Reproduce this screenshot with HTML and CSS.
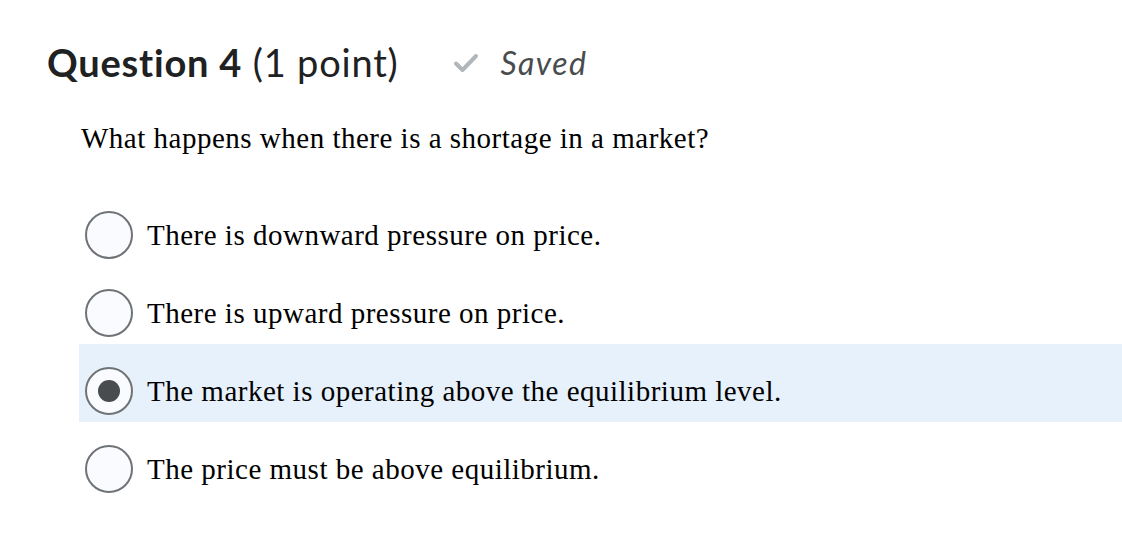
FILE: index.html
```html
<!DOCTYPE html>
<html>
<head>
<meta charset="utf-8">
<link rel="stylesheet" href="styles.css">
</head>
<body>
<main class="question">
  <header class="q-header">
    <h1 class="q-title"><strong>Question 4</strong> <span class="q-points">(1 point)</span></h1>
    <div class="q-status">
      <svg class="check" viewBox="0 0 26 20" width="26" height="20" aria-hidden="true"><path d="M3 10.5 L9.5 17 L23 3" fill="none" stroke="#b1b6ba" stroke-width="4" stroke-linecap="round" stroke-linejoin="round"/></svg>
      <span class="saved">Saved</span>
    </div>
  </header>
  <p class="q-text">What happens when there is a shortage in a market?</p>
  <ul class="options">
    <li class="option"><span class="radio"></span><span class="label">There is downward pressure on price.</span></li>
    <li class="option"><span class="radio"></span><span class="label">There is upward pressure on price.</span></li>
    <li class="option selected"><span class="radio checked"></span><span class="label">The market is operating above the equilibrium level.</span></li>
    <li class="option"><span class="radio"></span><span class="label">The price must be above equilibrium.</span></li>
  </ul>
</main>
</body>
</html>
```
FILE: styles.css
```css
* { box-sizing: border-box; }
body {
  margin: 0;
  background: #ffffff;
  color: #000;
}
.question {
  padding: 36px 0 0 47px;
}
.q-header {
  display: flex;
  align-items: center;
  gap: 54px;
  height: 52px;
}
.q-title {
  margin: 0;
  font-family: Lato, "Liberation Sans", sans-serif;
  font-size: 38px;
  font-weight: 400;
  letter-spacing: 0.8px;
  color: #202122;
  font-variant-ligatures: none;
}
.q-title strong { font-weight: 700; }
.q-status {
  display: flex;
  align-items: center;
  gap: 22px;
}
.check { margin-top: 2px; }
.saved {
  font-family: Lato, "Liberation Sans", sans-serif;
  font-style: italic;
  font-size: 32px;
  letter-spacing: 1.4px;
  color: #494c4e;
}
.q-text {
  margin: 34px 0 0 34px;
  font-family: "Liberation Serif", "Times New Roman", serif;
  font-size: 29px;
  letter-spacing: 0.5px;
  line-height: 32px;
}
.options {
  list-style: none;
  margin: 34px 0 0 32px;
  padding: 0;
}
.option {
  display: flex;
  align-items: center;
  height: 78px;
  padding: 16px 0 0 6px;
  font-family: "Liberation Serif", "Times New Roman", serif;
  font-size: 29px;
  letter-spacing: 0.5px;
}
.option.selected { background: #e6f1fb; }
.radio {
  width: 48px;
  height: 48px;
  border-radius: 50%;
  border: 2px solid #6f7376;
  background: #f9fbff;
  flex: none;
  display: flex;
  align-items: center;
  justify-content: center;
}
.radio.checked::after {
  content: "";
  width: 22px;
  height: 22px;
  border-radius: 50%;
  background: #494c4e;
}
.label { margin-left: 14px; }
```
